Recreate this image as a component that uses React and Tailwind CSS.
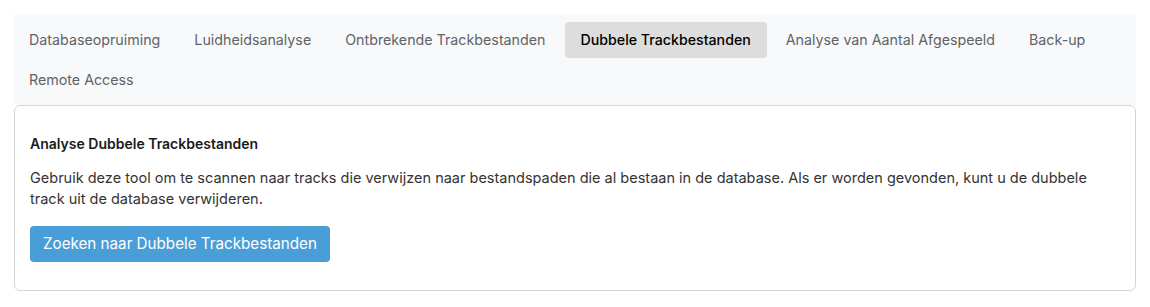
export default function App() {
  const tabs = [
    "Databaseopruiming",
    "Luidheidsanalyse",
    "Ontbrekende Trackbestanden",
    "Dubbele Trackbestanden",
    "Analyse van Aantal Afgespeeld",
    "Back-up",
    "Remote Access",
  ];
  const active = "Dubbele Trackbestanden";
  return (
    <div className="bg-white px-[14px] pt-[14px]" style={{ fontFamily: "Inter, 'Noto Sans', sans-serif" }}>
      <div className="bg-[#f8f9fa] pt-2 pb-[7px] flex flex-wrap gap-y-1 gap-x-[4px]">
        {tabs.map((t) => (
          <div
            key={t}
            className={
              t === active
                ? "h-9 px-[16px] flex items-center rounded-[4px] bg-[#dddddd] text-[14.2px] font-medium text-black"
                : "h-9 px-[15px] flex items-center rounded-[4px] text-[14.25px] text-[#5f6368]"
            }
          >
            {t}
          </div>
        ))}
      </div>
      <div className="border border-[#d4d4d4] rounded-[6px] px-[15px] pt-[28px] pb-[28px]">
        <div className="text-[14px] leading-5 font-semibold text-[#1a1a1a]">Analyse Dubbele Trackbestanden</div>
        <p className="mt-[13px] text-[14.5px] leading-[21px] text-[#333333]">
          Gebruik deze tool om te scannen naar tracks die verwijzen naar bestandspaden die al bestaan in de database. Als er worden gevonden, kunt u de dubbele track uit de database verwijderen.
        </p>
        <button className="mt-[17px] h-9 px-[13px] rounded-[4px] bg-[#4a9ed8] text-white text-[15.2px]">
          Zoeken naar Dubbele Trackbestanden
        </button>
      </div>
    </div>
  );
}
